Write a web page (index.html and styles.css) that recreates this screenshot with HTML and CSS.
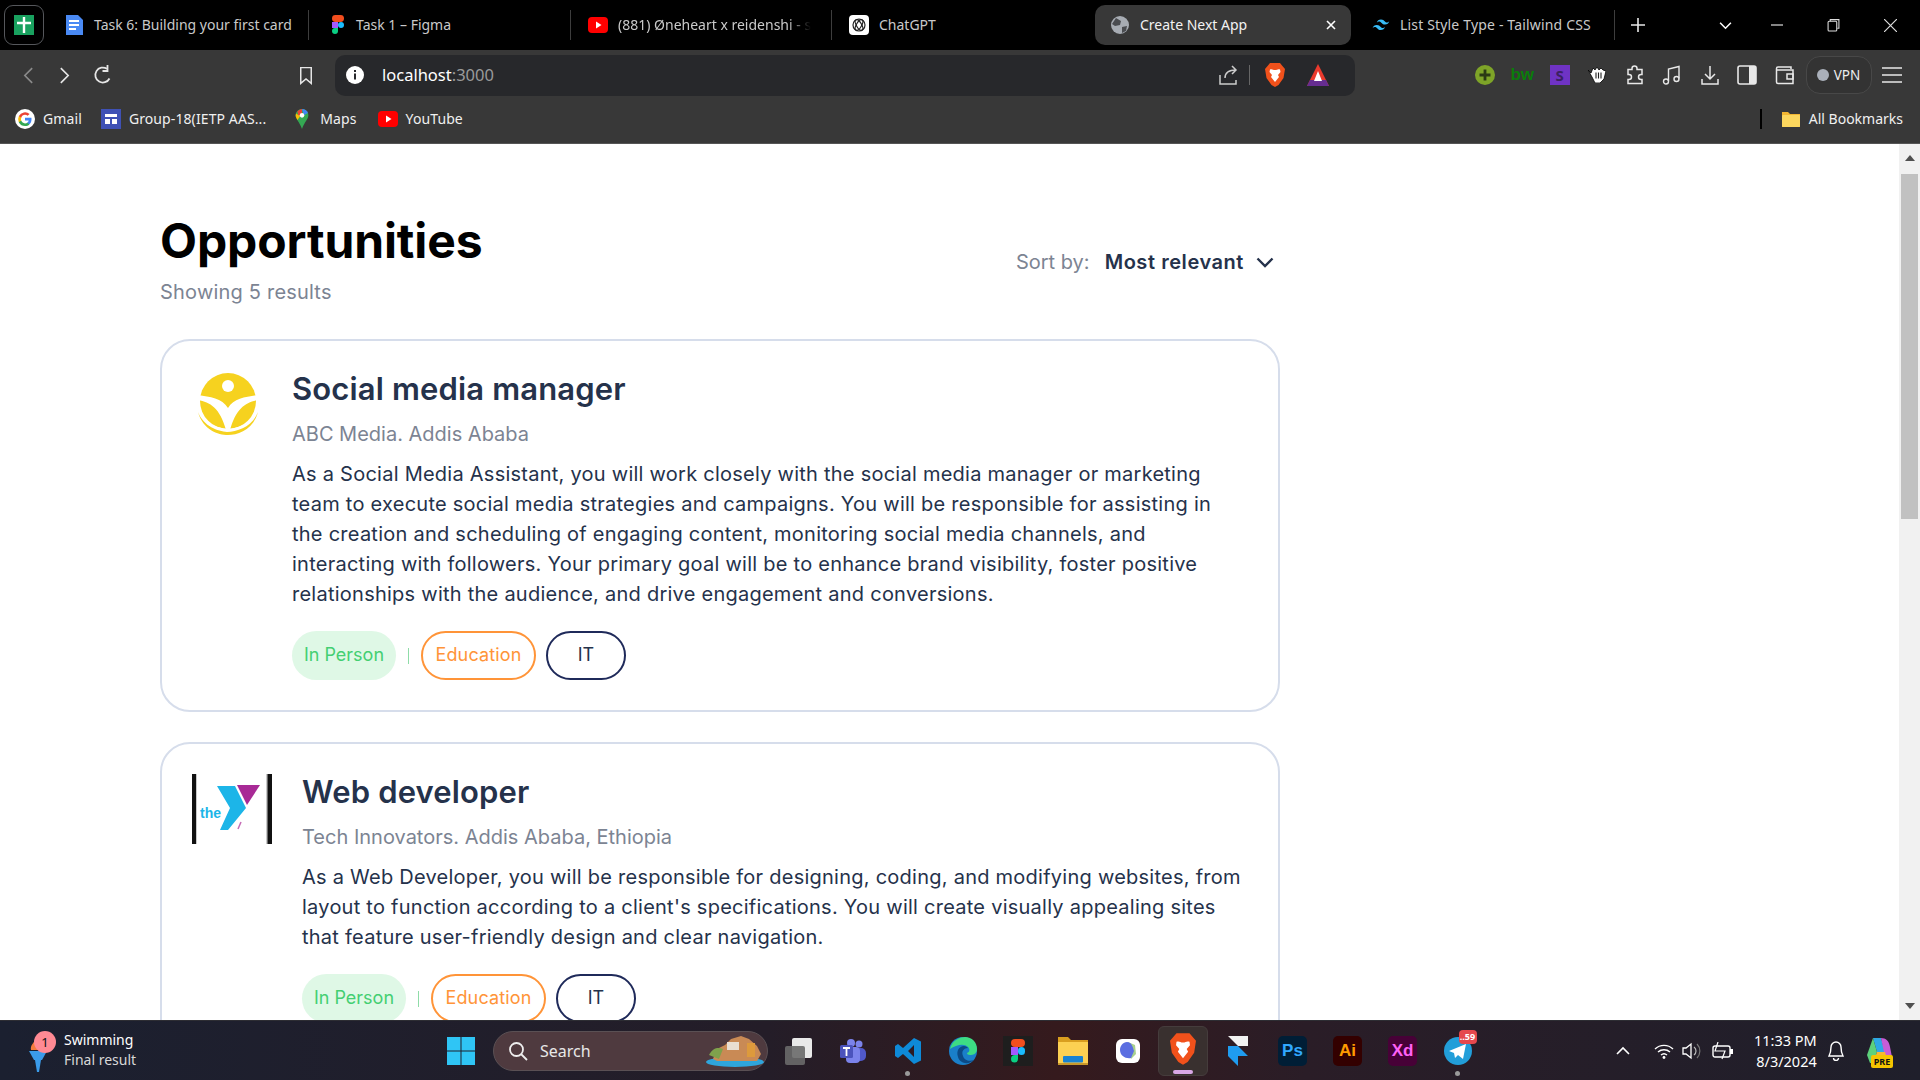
FILE: index.html
```html
<!DOCTYPE html>
<html lang="en">
<head>
<meta charset="utf-8">
<title>Create Next App</title>
<link rel="stylesheet" href="styles.css">
</head>
<body>
<div class="screen">
  <header class="tabstrip">
    <div class="tab-group"><svg class="ico20" viewBox="0 0 20 20"><rect width="20" height="24" y="-2" rx="2" fill="#19a15f"/><path d="M10 2v16M3 8h14" stroke="#fff" stroke-width="2.4"/></svg></div>
    <div class="tab tab-a"><svg class="ico20" viewBox="0 0 20 20"><path d="M2 0h12l5 5v15H2z" fill="#4a8af4"/><path d="M5 6h10M5 10h10M5 14h7" stroke="#fff" stroke-width="2"/></svg><span class="tab-text">Task 6: Building your first card</span></div>
    <div class="tab tab-b"><svg class="ico20" viewBox="0 0 20 20"><rect x="4" y="0" width="12" height="7" rx="3.4" fill="#f24e1e"/><rect x="4" y="7" width="6" height="6" fill="#a259ff"/><rect x="10" y="7" width="6" height="6" rx="3" fill="#1abcfe"/><path d="M4 16a3 3 0 0 1 3-3h3v3a3 3 0 0 1-6 0z" fill="#0acf83"/></svg><span class="tab-text tab-text-tight">Task 1 – Figma</span></div>
    <div class="tab tab-c"><svg class="ico20" viewBox="0 0 20 20"><rect y="2" width="20" height="16" rx="4" fill="#f00"/><path d="M8 6.500v7l5.500-3.500z" fill="#fff"/></svg><span class="tab-text fade">(881) Øneheart x reidenshi - s</span></div>
    <div class="tab tab-d"><svg class="ico20" viewBox="0 0 20 20"><rect width="20" height="20" rx="4" fill="#fff"/><g fill="none" stroke="#222" stroke-width="1.2"><circle cx="10" cy="10" r="6"/><ellipse cx="10" cy="10" rx="6" ry="2.6" transform="rotate(60 10 10)"/><ellipse cx="10" cy="10" rx="6" ry="2.6" transform="rotate(-60 10 10)"/></g></svg><span class="tab-text">ChatGPT</span></div>
    <div class="tab tab-active"><svg class="ico20" viewBox="0 0 20 20"><circle cx="10" cy="10" r="9" fill="#a7acb3"/><path d="M6 3l5 3-1 4-5 1-3-2zM12 12l5-1-1 5-4 2z" fill="#4a4c50"/></svg><span class="tab-text">Create Next App</span><svg class="tab-x" viewBox="0 0 10 10"><path d="M1 1l8 8M9 1l-8 8" stroke="#fff" stroke-width="1.6"/></svg></div>
    <div class="tab tab-f"><svg class="ico20" viewBox="0 0 20 20"><path d="M10 4.500C7.800 4.500 6.400 5.600 5.800 7.800c.8-1.100 1.800-1.500 2.900-1.200.6.200 1.100.6 1.600 1.100.8.800 1.700 1.800 3.700 1.800 2.200 0 3.600-1.100 4.200-3.300-.8 1.100-1.800 1.500-2.900 1.200-.6-.2-1.100-.6-1.600-1.100C12.900 5.500 12 4.500 10 4.500zM5.800 10C3.600 10 2.200 11.100 1.600 13.300c.8-1.100 1.800-1.500 2.900-1.200.6.200 1.100.6 1.600 1.100.8.800 1.700 1.800 3.700 1.800 2.200 0 3.600-1.100 4.200-3.300-.8 1.100-1.800 1.500-2.900 1.200-.6-.2-1.100-.6-1.600-1.100C8.700 11 7.800 10 5.800 10z" fill="#38bdf8"/></svg><span class="tab-text tab-text-wide">List Style Type - Tailwind CSS</span></div>
    <svg class="strip-plus" viewBox="0 0 14 14"><path d="M7 0v14M0 7h14" stroke="#e8e8e8" stroke-width="1.6"/></svg>
    <svg class="strip-chev" viewBox="0 0 14 10"><path d="M1 2l6 6 6-6" fill="none" stroke="#fff" stroke-width="1.7"/></svg>
    <svg class="win-btn win-min" viewBox="0 0 12 12"><path d="M0 6h12" stroke="#ddd" stroke-width="1.2"/></svg>
    <svg class="win-btn win-max" viewBox="0 0 12 12"><path d="M3 2.500V1h8v8H9.500" fill="none" stroke="#ddd"/><rect x="1" y="2.500" width="8" height="9" rx="1" fill="none" stroke="#ddd"/></svg>
    <svg class="win-btn win-close" viewBox="0 0 12 12"><path d="M0 0l12 12M12 0L0 12" stroke="#ddd" stroke-width="1.1"/></svg>
  </header>

  <nav class="toolbar">
    <svg class="nav-ico nav-back" viewBox="0 0 12 18"><path d="M10 1L2 9l8 8" fill="none" stroke="#8a8a8a" stroke-width="1.8"/></svg>
    <svg class="nav-ico nav-fwd" viewBox="0 0 12 18"><path d="M2 1l8 8-8 8" fill="none" stroke="#e6e6e6" stroke-width="1.8"/></svg>
    <svg class="nav-ico nav-reload" viewBox="0 0 20 20"><path d="M16.500 13.500A7.500 7.500 0 1 1 14 3.800" fill="none" stroke="#e6e6e6" stroke-width="1.8"/><path d="M14.500 0v6h-5" fill="none" stroke="#e6e6e6" stroke-width="1.800"/></svg>
    <svg class="nav-ico nav-mark" viewBox="0 0 16 20"><path d="M2 1h12v18l-6-5-6 5z" fill="none" stroke="#e6e6e6" stroke-width="1.7"/></svg>
    <div class="address">
      <svg class="ico18" viewBox="0 0 18 18"><circle cx="9" cy="9" r="9" fill="#fff"/><path d="M9 7.500v6M9 4v2" stroke="#27282b" stroke-width="2"/></svg>
      <span class="url">localhost<span class="url-port">:3000</span></span>
      <svg class="share" viewBox="0 0 20 20"><path d="M1 10v9h16v-4M6 13c0-5 3-8 11-8M13 1l4 4-4 4" fill="none" stroke="#ccc" stroke-width="1.5"/></svg>
      <span class="addr-sep"></span>
      <svg class="brave20" viewBox="0 0 20 24"><path d="M5 0h10l2 2.500L20 6l-1.500 9-5 7-3.500 2-3.500-2-5-7L0 6l3-3.500z" fill="#f1511b"/><path d="M10 7c-2 0-3-1.500-5-.5L4.500 9 7 12l-1 2 4 5 4-5-1-2 2.500-3L15 6.500C13 5.500 12 7 10 7z" fill="#fff"/></svg>
      <svg class="brave-tri" viewBox="0 0 24 22"><path d="M12 0l11 22H1z" fill="#ea3a2d"/><path d="M1 22l3-6h16l3 6z" fill="#662d91"/><path d="M12 7l4 10H8z" fill="#fff"/></svg>
    </div>
    <div class="ext ext-first"><svg class="ico20" viewBox="0 0 20 20"><circle cx="10" cy="10" r="10" fill="#7ea428"/><path d="M10 4.500v11M4.500 10h11" stroke="#2b3a14" stroke-width="2.800"/></svg></div>
    <div class="ext"><span class="ext-bw">bw</span></div>
    <div class="ext"><span class="ext-s">S</span></div>
    <div class="ext"><svg class="hand" viewBox="0 0 18 16"><path d="M0 3l3 3 2-5 2 2 2-3 2 3 2-2 2 2 3 1-2 8-4 4H7L4 10z" fill="#fff" stroke="#000" stroke-width=".8"/><path d="M8 5.500v6M10.500 5.500v6M13 5.500v6" stroke="#222" stroke-width="1.100"/></svg></div>
    <div class="ext"><svg class="ico20" viewBox="0 0 20 20"><path d="M7 4a2.500 2.500 0 0 1 5 0v1h5v5h-1a2.500 2.500 0 0 0 0 5h1v4H3v-4h1a2.500 2.500 0 0 0 0-5H3V5h4z" transform="translate(0 -.5)" fill="none" stroke="#e8e8e8" stroke-width="1.500"/></svg></div>
    <div class="ext"><svg class="ico20" viewBox="0 0 20 20"><path d="M6.500 16V4L17 1.500v12" fill="none" stroke="#e8e8e8" stroke-width="1.400"/><circle cx="4" cy="16.500" r="2.500" fill="none" stroke="#e8e8e8" stroke-width="1.400"/><circle cx="14.500" cy="14" r="2.500" fill="none" stroke="#e8e8e8" stroke-width="1.400"/></svg></div>
    <div class="ext"><svg class="ico20" viewBox="0 0 20 20"><path d="M10 1v13M5 9l5 5 5-5M2 14v5h16v-5" fill="none" stroke="#e8e8e8" stroke-width="1.500"/></svg></div>
    <div class="ext"><svg class="ico20" viewBox="0 0 20 20"><rect x="1" y="1" width="18" height="18" rx="2" fill="none" stroke="#e8e8e8" stroke-width="1.600"/><rect x="12" y="1" width="7" height="18" fill="#e8e8e8"/></svg></div>
    <div class="ext"><svg class="ico20" viewBox="0 0 20 20"><path d="M16 4V2H3a1.500 1.500 0 0 0-1.500 1.500V17A1.500 1.500 0 0 0 3 18.500h15V5H2" fill="none" stroke="#e8e8e8" stroke-width="1.500"/><rect x="12" y="9" width="6" height="5" fill="none" stroke="#e8e8e8" stroke-width="1.500"/></svg></div>
    <div class="vpn"><span class="vpn-dot"></span>VPN</div>
    <svg class="menu" viewBox="0 0 20 16"><path d="M0 1h20M0 8h20M0 15h20" stroke="#e8e8e8" stroke-width="1.500"/></svg>
  </nav>

  <nav class="bookmarks">
    <span class="bm bm-gmail"><svg class="ico20" viewBox="0 0 20 20"><circle cx="10" cy="10" r="10" fill="#fff"/><path d="M16.500 10.200c0-.5 0-1-.1-1.400H10v2.700h3.700a3.200 3.200 0 0 1-1.400 2.100v1.700h2.200c1.300-1.200 2-3 2-5.100z" fill="#4285f4"/><path d="M10 17c1.800 0 3.300-.6 4.500-1.600l-2.200-1.700c-.6.400-1.400.7-2.300.7-1.800 0-3.300-1.200-3.800-2.800H3.900v1.800A7 7 0 0 0 10 17z" fill="#34a853"/><path d="M6.200 11.600a4.200 4.200 0 0 1 0-2.700V7H3.900a7 7 0 0 0 0 6.300z" fill="#fbbc05"/><path d="M10 5.800c1 0 1.900.3 2.600 1l2-1.900A7 7 0 0 0 3.900 7l2.300 1.800C6.700 7 8.200 5.800 10 5.800z" fill="#ea4335"/></svg>Gmail</span>
    <span class="bm bm-group"><svg class="ico20" viewBox="0 0 20 20"><rect width="20" height="20" fill="#3f51b5"/><path d="M4 5h12v3H4zM4 10h5v5H4zM11 10h5v5h-5z" fill="#fff"/></svg>Group-18(IETP AAS...</span>
    <span class="bm bm-maps"><svg class="ico20" viewBox="0 0 16 22"><path d="M8 0a7 7 0 0 1 7 7c0 4-4 7-7 15C5 14 1 11 1 7a7 7 0 0 1 7-7z" fill="#34a853"/><path d="M3 2.500A7 7 0 0 1 8 0v5L4 8z" fill="#ea4335"/><path d="M8 0a7 7 0 0 1 6.500 4.500L10 7z" fill="#4285f4"/><path d="M1.500 5L6 8l-3 4C1.800 10 1 9 1 7z" fill="#fbbc05"/><circle cx="8" cy="7" r="2.500" fill="#fff"/></svg>Maps</span>
    <span class="bm bm-yt"><svg class="ico20" viewBox="0 0 20 20"><rect y="2" width="20" height="16" rx="4" fill="#f00"/><path d="M8 6.500v7l5.500-3.500z" fill="#fff"/></svg>YouTube</span>
    <span class="bm-sep"></span>
    <span class="bm bm-all"><svg class="ico20" viewBox="0 0 20 20"><path d="M1 3h6l2 2h10v13H1z" fill="#f2b632"/><rect x="1" y="6" width="18" height="12" rx="1" fill="#fcd75e"/></svg>All Bookmarks</span>
  </nav>

  <div class="viewport">
    <main class="page">
      <div class="page-head">
        <div>
          <h1 class="page-title">Opportunities</h1>
          <p class="page-count">Showing 5 results</p>
        </div>
        <div class="sort">
          <span class="sort-label">Sort by:</span>
          <span class="sort-value">Most relevant</span>
          <svg class="sort-chev" viewBox="0 0 18 11"><path d="M1.500 1.500L9 9l7.500-7.500" fill="none" stroke="#25324b" stroke-width="2.400"/></svg>
        </div>
      </div>

      <article class="card">
        <div class="logo-box logo-sun">
          <svg class="sun" viewBox="2 7 70 70"><ellipse cx="38" cy="37" rx="28" ry="28" fill="#f6d21f"/><circle cx="38" cy="22" r="6" fill="#fff"/><path d="M8 31C20 33 32 34 38 44 44 34 56 33 68 31V36C56 38 46 44 40 66H36C30 44 20 38 8 36z" fill="#fff"/><path d="M9 46C14 60 28 64 38 65 48 64 62 60 67 46V40H72V70H4V40H9z" fill="#fff"/><path d="M8 48C14 63 28 67 37 68 48 67 62 63 68 48 63 66 48 71 38 71 28 71 13 66 8 48z" fill="#f6d21f"/></svg>
        </div>
        <div class="card-body">
          <h2 class="card-title">Social media manager</h2>
          <p class="card-sub">ABC Media. Addis Ababa</p>
          <p class="card-desc">As a Social Media Assistant, you will work closely with the social media manager or marketing team to execute social media strategies and campaigns. You will be responsible for assisting in the creation and scheduling of engaging content, monitoring social media channels, and interacting with followers. Your primary goal will be to enhance brand visibility, foster positive relationships with the audience, and drive engagement and conversions.</p>
          <div class="tags">
            <span class="tag tag-green">In Person</span>
            <span class="tag-sep"></span>
            <span class="tag tag-orange">Education</span>
            <span class="tag tag-navy">IT</span>
          </div>
        </div>
      </article>

      <article class="card">
        <div class="logo-box logo-y">
          <svg class="ymca" viewBox="0 0 80 70"><rect width="80" height="70" fill="#fff"/><rect width="5" height="70" fill="#c9c9c9"/><rect width="4" height="70" fill="#111"/><rect x="74" width="6" height="70" fill="#c9c9c9"/><rect x="75.500" width="4.500" height="70" fill="#111"/><path d="M25 12H43L54 34 36 56H28L38 34z" fill="#1cb5e8"/><path d="M45 11H68L55 31z" fill="#a82a96"/><path d="M49 48l-3 7" stroke="#c56ab5" stroke-width="1.500"/><text x="8" y="44" class="ymca-the">the</text></svg>
        </div>
        <div class="card-body">
          <h2 class="card-title">Web developer</h2>
          <p class="card-sub">Tech Innovators. Addis Ababa, Ethiopia</p>
          <p class="card-desc">As a Web Developer, you will be responsible for designing, coding, and modifying websites, from layout to function according to a client's specifications. You will create visually appealing sites that feature user-friendly design and clear navigation.</p>
          <div class="tags">
            <span class="tag tag-green">In Person</span>
            <span class="tag-sep"></span>
            <span class="tag tag-orange">Education</span>
            <span class="tag tag-navy">IT</span>
          </div>
        </div>
      </article>
    </main>
    <div class="scrollbar">
      <svg class="sb-arrow" viewBox="0 0 10 6"><path d="M5 0l5 6H0z" fill="#505050"/></svg>
      <div class="sb-thumb"></div>
      <div class="sb-rest"></div>
      <svg class="sb-arrow" viewBox="0 0 10 6"><path d="M5 6l5-6H0z" fill="#505050"/></svg>
    </div>
  </div>

  <footer class="taskbar">
    <div class="widget">
      <span class="widget-ico"><svg class="torch" viewBox="0 0 20 36"><path d="M9 0c4 4 9 7 8 13H3C2 8 6 6 9 0z" fill="#f47b3e"/><path d="M1 14h18l-5 9H6z" fill="#3a9bea"/><path d="M7 23h6l-2 12H9z" fill="#3a9bea"/></svg><span class="widget-badge">1</span></span>
      <div class="widget-text"><span class="widget-top">Swimming</span><span class="widget-sub">Final result</span></div>
    </div>
    <div class="dock">
      <span class="dock-item"><svg class="ico28" viewBox="0 0 28 28"><path d="M0 0h13.500v13.500H0zM14.500 0H28v13.500H14.500zM0 14.500h13.500V28H0zM14.500 14.500H28V28H14.500z" fill="#2fc5f5"/></svg></span>
      <div class="search"><svg class="search-ico" viewBox="0 0 20 20"><circle cx="8.500" cy="8.500" r="6.500" fill="none" stroke="#eee" stroke-width="1.800"/><path d="M13 13l6 6" stroke="#eee" stroke-width="1.800"/></svg><span class="search-text">Search</span><svg class="search-art" viewBox="0 0 60 32"><ellipse cx="30" cy="27" rx="29" ry="5" fill="#2fa5dc"/><path d="M8 24l4-10 8-4 6-6 10-3 8 3 8 7 4 8-4 7H12z" fill="#c98a55"/><rect x="22" y="7" width="12" height="8" fill="#e9dfd2"/><rect x="42" y="8" width="8" height="14" fill="#dd9a3c"/><path d="M4 20c4-8 10-8 14-6l-4 10z" fill="#7fa14c"/></svg></div>
      <span class="dock-item"><svg class="ico28" viewBox="0 0 28 28"><rect x="8" y="1" width="20" height="20" rx="2" fill="#e9e9e9"/><rect x="1" y="9" width="20" height="19" rx="2" fill="#6a6a6a" opacity=".9"/></svg></span>
      <span class="dock-item"><svg class="ico28" viewBox="0 0 28 28"><circle cx="20" cy="7" r="3.500" fill="#7b83eb"/><rect x="15" y="11" width="12" height="13" rx="5" fill="#5059c9"/><circle cx="12" cy="6" r="4" fill="#7b83eb"/><rect x="7" y="10" width="14" height="16" rx="4" fill="#7b83eb"/><rect x="1" y="8" width="13" height="13" rx="1.500" fill="#4b53bc"/><path d="M4 11h7M7.500 11v8" stroke="#fff" stroke-width="1.800"/></svg></span>
      <span class="dock-item dock-dot"><svg class="ico28" viewBox="0 0 28 28"><path d="M20 1l7 3.500v19L20 27 9 17l-5 4-3-2v-10l3-2 5 4zM20 8l-6 6 6 6z" fill="#0e8ad8"/></svg></span>
      <span class="dock-item"><svg class="ico28" viewBox="0 0 28 28"><circle cx="14" cy="14" r="14" fill="#1a7fc9"/><path d="M1 12C3 3 11 0 16 0c7 0 12 5 12 12 0 5-4 6-7 6-2 0-3-1-3-2 3-1 3-4 1-6-4-4-12-2-18 2z" fill="#3ddc84"/><path d="M9 20c-2-6 1-11 6-11 2 0 3 1 4 2-4 0-7 3-5 8 1 4 6 6 11 4-5 5-14 4-16-3z" fill="#0c4a86"/></svg></span>
      <span class="dock-item"><svg class="ico30" viewBox="0 0 30 30"><rect width="30" height="30" fill="#1e1e1e"/><rect x="8" y="3" width="14" height="8" rx="4" fill="#f24e1e"/><rect x="8" y="11" width="7" height="8" fill="#a259ff"/><rect x="15" y="11" width="7" height="8" rx="3.500" fill="#1abcfe"/><path d="M8 23a4 4 0 0 1 4-4h3v4a3.500 3.500 0 0 1-7 0z" fill="#0acf83"/></svg></span>
      <span class="dock-item"><svg class="ico30" viewBox="0 0 30 28"><path d="M0 0h10l3 3h17v25H0z" fill="#d99e1f"/><rect y="5" width="30" height="23" fill="#fcd052"/><rect y="26" width="30" height="2" fill="#c9982a"/><rect x="5" y="19" width="20" height="6.500" rx="1" fill="#1882d1"/></svg></span>
      <span class="dock-item"><svg class="ico24" viewBox="0 0 24 24"><rect width="24" height="24" rx="6" fill="#fff"/><path d="M12 3l7 3 1 9-5 5z" fill="#a8d08d"/><path d="M11 3c5 0 6 6 7 9l-3 7c-5 1-11-2-11-8 0-4 3-8 7-8z" fill="#5b6ee1"/></svg></span>
      <span class="dock-item dock-active"><svg class="brave28" viewBox="0 0 28 34"><path d="M7 0h14l3 3.500L28 8l-2 13-7 10-5 3-5-3-7-10L0 8l4-4.500z" fill="#f1511b"/><path d="M14 10c-3 0-4-2-7-.7L6.500 13 10 17l-1.500 3 5.500 7 5.500-7L18 17l3.500-4L21 9.300C18 8 17 10 14 10z" fill="#fff"/></svg></span>
      <span class="dock-item"><svg class="framer" viewBox="0 0 20 30"><path d="M0 0H20V10H10z" fill="#f2f2f2"/><path d="M0 10H10L20 20H10V30L0 20z" fill="#1f9cf0"/></svg></span>
      <span class="dock-item"><span class="adobe adobe-ps">Ps</span></span>
      <span class="dock-item"><span class="adobe adobe-ai">Ai</span></span>
      <span class="dock-item"><span class="adobe adobe-xd">Xd</span></span>
      <span class="dock-item dock-dot"><span class="tg"><svg class="ico28" viewBox="0 0 28 28"><circle cx="14" cy="14" r="14" fill="#229ed9"/><path d="M5 14l17-7-3 15-5-4-3 3-1-5z" fill="#fff"/></svg><span class="tg-badge">..59</span></span></span>
    </div>
    <div class="tray">
      <svg class="tray-chev" viewBox="0 0 14 9"><path d="M1 8l6-6 6 6" fill="none" stroke="#fff" stroke-width="1.600"/></svg>
      <svg class="tray-wifi" viewBox="0 0 20 16"><path d="M1 6a13 13 0 0 1 18 0M4 9a9 9 0 0 1 12 0M7 12a4.500 4.500 0 0 1 6 0" fill="none" stroke="#fff" stroke-width="1.400"/><circle cx="10" cy="14.500" r="1.400" fill="#fff"/></svg>
      <svg class="tray-vol" viewBox="0 0 20 18"><path d="M1 6h3l5-4v14l-5-4H1z" fill="none" stroke="#fff" stroke-width="1.300"/><path d="M12 5a5 5 0 0 1 0 8" fill="none" stroke="#bbb" stroke-width="1.200"/><path d="M15 2a10 10 0 0 1 0 14" fill="none" stroke="#777" stroke-width="1.200"/></svg>
      <svg class="tray-bat" viewBox="0 0 22 18"><rect x="1" y="4" width="17" height="11" rx="2" fill="none" stroke="#fff" stroke-width="1.400"/><rect x="18" y="7" width="3" height="5" fill="#fff"/><path d="M6 0L3 9h10l-3 8" fill="none" stroke="#fff" stroke-width="1.200"/></svg>
      <div class="clock"><span>11:33 PM</span><span>8/3/2024</span></div>
      <svg class="tray-bell" viewBox="0 0 16 20"><path d="M8 1a5 5 0 0 1 5 5c0 5 1 7 2 9H1c1-2 2-4 2-9a5 5 0 0 1 5-5zM5.500 17a2.500 2.500 0 0 0 5 0" fill="none" stroke="#fff" stroke-width="1.400"/></svg>
      <span class="copilot"><svg class="ico28" viewBox="0 0 28 28"><path d="M8 1h8l4 14h-8z" fill="#2ea8e6"/><path d="M16 1c5 0 8 3 9 9l2 10h-7z" fill="#c75dd6"/><path d="M2 18L8 1l4 14-4 11H5z" fill="#5dd17b"/><path d="M8 26l4-11h8l3 11z" fill="#f7b731"/></svg><span class="pre">PRE</span></span>
    </div>
  </footer>
</div>
</body>
</html>
```

FILE: styles.css
```css
* { box-sizing: border-box; }
html, body { margin: 0; height: 100%; overflow: hidden; }
body { font-family: "Noto Sans", sans-serif; background: #fff; }
p, h1, h2 { margin: 0; }
svg { display: block; flex: none; }

.screen { height: 1080px; display: flex; flex-direction: column; }
.ico18 { width: 18px; height: 18px; }
.ico20 { width: 20px; height: 20px; }
.ico24 { width: 24px; height: 24px; }
.ico28 { width: 28px; height: 28px; }
.ico30 { width: 30px; height: 30px; }

/* tab strip */
.tabstrip { height: 50px; background: #000; display: flex; align-items: center; flex: none; color: #c9c9c9; font-size: 14px; }
.tab-group { width: 40px; height: 40px; margin-left: 4px; border: 1.5px solid #55575b; border-radius: 9px; display: flex; align-items: center; justify-content: center; }
.tab { height: 40px; display: flex; align-items: center; gap: 10px; flex: none; white-space: nowrap; }
.tab-text { white-space: nowrap; padding-bottom: 2px; }
.tab-text-tight { margin-left: -2px; }
.tab-text-wide { letter-spacing: .17px; }
.tab-a { width: 265px; padding-left: 20px; border-right: 1px solid #3d3d3d; height: 30px; }
.tab-b { width: 262px; padding-left: 19px; border-right: 1px solid #3d3d3d; height: 30px; }
.tab-c { width: 261px; padding-left: 17px; border-right: 1px solid #3d3d3d; height: 30px; }
.tab-d { width: 263px; padding-left: 17px; }
.tab-active { width: 256px; padding-left: 15px; background: #383838; border-radius: 10px; color: #f2f2f2; }
.tab-f { width: 264px; padding-left: 20px; border-right: 1px solid #3d3d3d; height: 30px; gap: 9px; }
.tab-x { width: 10px; height: 10px; margin-left: auto; margin-right: 15px; }
.fade { -webkit-mask-image: linear-gradient(90deg, #000 88%, transparent); mask-image: linear-gradient(90deg, #000 88%, transparent); }
.strip-plus { width: 14px; height: 14px; margin-left: 16px; }
.strip-chev { width: 13px; height: 9px; margin-left: 74px; }
.win-btn { width: 12px; height: 12px; }
.win-min { margin-left: 39px; }
.win-max { margin-left: 44px; height: 14px; width: 13px; }
.win-close { margin-left: 44px; width: 13px; height: 13px; }

/* toolbar */
.toolbar { height: 50px; background: #383838; display: flex; align-items: center; flex: none; }
.nav-back { width: 11px; height: 17px; margin-left: 23px; }
.nav-fwd { width: 11px; height: 17px; margin-left: 25px; }
.nav-reload { width: 20px; height: 20px; margin-left: 23px; }
.nav-mark { width: 14px; height: 19px; margin-left: 186px; }
.address { width: 1020px; height: 41px; margin-left: 22px; background: #27282b; border-radius: 10px; display: flex; align-items: center; padding: 0 25px 0 11px; flex: none; }
.url { font-size: 16.500px; color: #fff; margin-left: 18px; padding-bottom: 1px; }
.url-port { color: #9a9a9a; }
.share { width: 20px; height: 20px; margin-left: auto; }
.addr-sep { width: 1px; height: 20px; background: #666; margin: 0 15px 0 10px; }
.brave20 { width: 20px; height: 24px; }
.brave-tri { width: 24px; height: 22px; margin-left: 21px; }
.ext { width: 37.500px; display: flex; align-items: center; justify-content: center; flex: none; }
.ext-first { margin-left: 111px; }
.ext-bw { color: #0a7d0a; font-size: 17px; font-weight: 700; font-family: "Liberation Sans", sans-serif; }
.ext-s { width: 20px; height: 20px; background: #6f33c4; color: #3b2060; font-size: 15px; font-weight: 700; text-align: center; line-height: 20px; }
.hand { width: 18px; height: 16px; }
.vpn { width: 66px; height: 38px; margin-left: 2px; border: 1px solid #484848; background: #333; border-radius: 14px; display: flex; align-items: center; justify-content: center; gap: 5px; font-size: 13.500px; color: #eee; flex: none; }
.vpn-dot { width: 12px; height: 12px; border-radius: 50%; background: #aab0ba; }
.menu { width: 20px; height: 16px; margin-left: 10px; }

/* bookmarks */
.bookmarks { height: 44px; background: #383838; border-bottom: 1px solid #555; display: flex; align-items: center; flex: none; padding-bottom: 6px; font-size: 14px; letter-spacing: .1px; color: #f0f0f0; }
.bm { display: flex; align-items: center; gap: 8px; white-space: nowrap; }
.bm-gmail { margin-left: 15px; }
.bm-group { margin-left: 19px; }
.bm-maps { margin-left: 26px; }
.bm-yt { margin-left: 21px; }
.bm-sep { width: 2px; height: 20px; background: #000; margin-left: auto; }
.bm-all { margin-left: 19px; margin-right: 17px; letter-spacing: 0; }

/* page */
.viewport { flex: 1; min-height: 0; display: flex; background: #fff; }
.page { flex: 1; min-width: 0; overflow: hidden; padding: 68px 0 0 160px; font-family: Inter, sans-serif; }
.page-head { width: 1119px; display: flex; justify-content: space-between; align-items: center; margin-bottom: 32px; }
.page-title { font-size: 48px; line-height: 58px; font-weight: 700; color: #000; letter-spacing: -.1px; }
.page-count { font-size: 20px; line-height: 30px; color: #7c8493; margin-top: 7px; letter-spacing: .2px; }
.sort { display: flex; align-items: center; margin: 5px 5px 0 0; font-size: 20px; line-height: 30px; }
.sort-label { color: #7c8493; }
.sort-value { color: #25324b; font-weight: 600; margin-left: 15px; letter-spacing: .56px; }
.sort-chev { width: 18px; height: 11px; margin-left: 12px; }

.card { width: 1120px; border: 2px solid #d6ddeb; border-radius: 30px; padding: 30px; display: flex; gap: 30px; margin-bottom: 30px; }
.logo-box { flex: none; display: flex; justify-content: center; }
.logo-sun { width: 70px; }
.sun { width: 70px; height: 70px; }
.logo-y { width: 80px; }
.ymca { width: 80px; height: 70px; }
.ymca-the { font: 700 14px "Liberation Sans", sans-serif; fill: #1cb5e8; }
.card-body { flex: 1; min-width: 0; }
.card-title { font-size: 31px; line-height: 38px; font-weight: 600; color: #25324b; margin-top: -1px; letter-spacing: .15px; }
.card-sub { font-size: 20px; line-height: 30px; color: #7c8493; margin-top: 11px; }
.card-desc { max-width: 945px; font-size: 20px; line-height: 30px; color: #25324b; margin-top: 10px; letter-spacing: .25px; }
.tags { display: flex; align-items: center; margin-top: 22px; font-size: 18px; }
.tag { height: 49px; border-radius: 25px; display: flex; align-items: center; justify-content: center; padding-bottom: 2px; }
.tag-green { width: 104px; background: #dff8e6; color: #44cf72; }
.tag-sep { width: 1px; height: 16px; background: #8fdca8; margin: 0 12px; }
.tag-orange { width: 115px; border: 2px solid #ff9438; color: #ff9438; margin-right: 10px; letter-spacing: .15px; }
.tag-navy { width: 80px; border: 2px solid #1f2a5a; color: #25324b; }

.scrollbar { width: 21px; background: #f1f1f1; display: flex; flex-direction: column; align-items: center; flex: none; }
.sb-arrow { width: 10px; height: 6px; margin: 11px 0; }
.sb-thumb { width: 17px; height: 345px; margin-top: 2px; background: #c1c1c1; }
.sb-rest { flex: 1; }

/* taskbar */
.taskbar { height: 60px; flex: none; display: flex; align-items: center; color: #fff; border-top: 1px solid #2d2d33; background: linear-gradient(90deg, #1b2030 0%, #241d28 40%, #351a1d 55%, #2a1d27 68%, #1f1f2b 100%); }
.widget { display: flex; align-items: center; width: 433px; padding-left: 28px; flex: none; gap: 6px; }
.widget-ico { position: relative; width: 30px; height: 40px; display: block; }
.torch { width: 20px; height: 36px; position: absolute; left: 0; top: 6px; }
.widget-badge { position: absolute; left: 6px; top: 0; width: 22px; height: 22px; border-radius: 50%; background: #ff8a94; color: #111; font-size: 13px; line-height: 22px; text-align: center; }
.widget-text { display: flex; flex-direction: column; font-size: 14px; line-height: 20px; padding-bottom: 2px; }
.widget-sub { color: #d8d8d8; }
.dock { display: flex; align-items: center; flex: none; }
.dock-item { width: 55px; height: 50px; display: flex; align-items: center; justify-content: center; position: relative; flex: none; }
.dock-dot::after { content: ""; position: absolute; bottom: 0; left: 25px; width: 5px; height: 5px; border-radius: 50%; background: #9a9a9a; }
.dock-active { width: 50px; margin: 0 2.500px; background: #39302f; border-radius: 6px; border: 1px solid #453c3c; }
.dock-active::after { content: ""; position: absolute; bottom: 1px; left: 14px; width: 20px; height: 4px; border-radius: 2px; background: #d9a7e6; }
.brave28 { width: 26px; height: 32px; margin-bottom: 3px; }
.framer { width: 20px; height: 30px; }
.search { width: 275px; height: 40px; margin: 0 2px 0 5px; border-radius: 20px; background: #4f3a3f; border: 1px solid #5a5054; display: flex; align-items: center; padding: 0 2px 0 14px; flex: none; font-size: 16px; color: #e8e8e8; }
.search-ico { width: 20px; height: 20px; }
.search-text { margin-left: 12px; }
.search-art { width: 60px; height: 32px; margin-left: auto; }
.adobe { width: 29px; height: 30px; border-radius: 5px; display: flex; align-items: center; justify-content: center; font-family: "Liberation Sans", sans-serif; font-weight: 700; font-size: 17px; }
.adobe-ps { background: #001e36; color: #31a8ff; }
.adobe-ai { background: #330000; color: #ff9a00; }
.adobe-xd { background: #470137; color: #ff61f6; }
.tg { position: relative; display: block; }
.tg-badge { position: absolute; left: 15px; top: -7px; height: 14px; width: 18px; background: #e5484d; border-radius: 4px; font-size: 9px; line-height: 14px; text-align: center; color: #fff; font-weight: 700; }
.tray { display: flex; align-items: center; flex: 1; margin-left: 131px; }
.tray-chev { width: 14px; height: 9px; }
.tray-wifi { width: 20px; height: 16px; margin-left: 24px; }
.tray-vol { width: 20px; height: 18px; margin-left: 8px; }
.tray-bat { width: 22px; height: 18px; margin-left: 10px; }
.clock { display: flex; flex-direction: column; align-items: flex-end; font-size: 14.500px; line-height: 21px; margin-left: 20px; white-space: nowrap; }
.tray-bell { width: 16px; height: 20px; margin-left: 11px; }
.copilot { position: relative; margin-left: 21px; display: block; }
.pre { position: absolute; left: 6px; top: 18px; height: 13px; background: #f5c400; color: #111; font-size: 9px; font-weight: 700; line-height: 13px; padding: 0 3px; border-radius: 2px; }
```
